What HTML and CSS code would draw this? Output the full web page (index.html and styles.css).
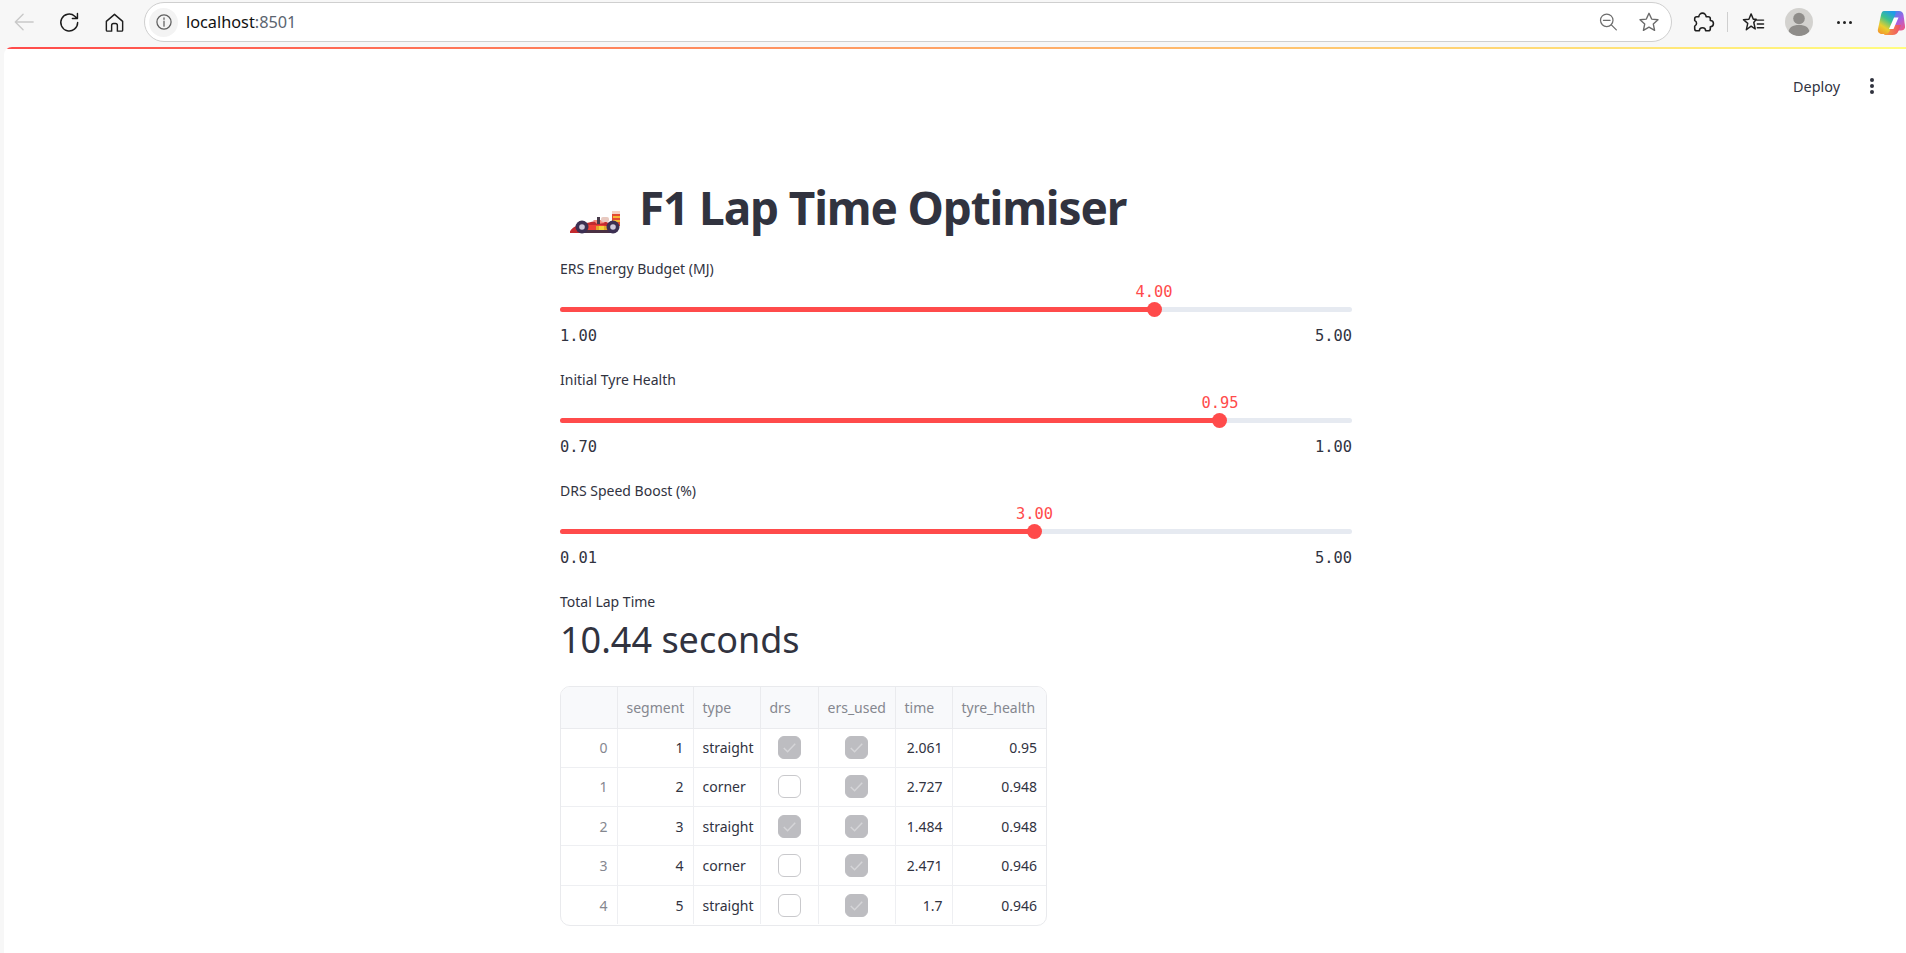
FILE: index.html
```html
<!DOCTYPE html>
<html lang="en">
<head>
<meta charset="utf-8">
<title>F1 Lap Time Optimiser</title>
<link rel="stylesheet" href="styles.css">
</head>
<body>
<header class="chrome">
  <div class="nav">
    <svg class="ic back" viewBox="0 0 24 24"><path d="M22 12H3M11 3.500 2.500 12l8.500 8.500"/></svg>
    <svg class="ic reload" viewBox="0 0 24 24"><path d="M20.500 12a8.800 8.800 0 1 1-3-6.600L20 7.700M20.300 2.500v5.300H15"/></svg>
    <svg class="ic home" viewBox="0 0 24 24"><path d="M12 3.500 3.500 10.800V20a1 1 0 0 0 1 1H9v-6a2 2 0 0 1 2-2h2a2 2 0 0 1 2 2v6h4.500a1 1 0 0 0 1-1v-9.200z"/></svg>
  </div>
  <div class="omni">
    <span class="site-info"><svg class="ic info" viewBox="0 0 24 24"><circle cx="12" cy="12" r="8.500"/><path d="M12 11v6M12 7v1.800"/></svg></span>
    <span class="url">localhost<span class="port">:8501</span></span>
    <span class="omni-right">
      <svg class="ic zoomout" viewBox="0 0 24 24"><circle cx="10.500" cy="10" r="7.500"/><path d="M6.500 10h8M16 15.500l6 6"/></svg>
      <svg class="ic star" viewBox="0 0 24 24"><path d="m12 2.500 2.900 6.300 6.900.8-5.100 4.700 1.400 6.800-6.100-3.400-6.100 3.400 1.400-6.800L2.200 9.600l6.900-.8z"/></svg>
    </span>
  </div>
  <div class="tools">
    <svg class="ic ext" viewBox="0 0 24 24"><path d="M8.500 6.500a3.500 3.500 0 0 1 7 0h2a2 2 0 0 1 2 2V10a3 3 0 0 1 0 6v2a2 2 0 0 1-2 2H15a3 3 0 0 0-6 0H6.500a2 2 0 0 1-2-2v-2.500a3 3 0 0 0 0-5.500V8.500a2 2 0 0 1 2-2z"/></svg>
    <span class="divider"></span>
    <svg class="ic fav" viewBox="0 0 24 24"><path d="m9.500 3 2.300 5.600h3L12.300 12l1.500 6.800-4.300-3-5 3.800 1.500-6.700L1.500 9.100l5.700-.5zM15 9.500h7.500M16 13.500h6.500M16 17.500h6.500"/></svg>
    <span class="avatar"><svg viewBox="0 0 28 28"><circle cx="14" cy="10.500" r="5.800"/><path d="M3.500 24.500c.6-5.500 4-7.500 10.500-7.500s9.900 2 10.500 7.500A14 14 0 0 1 14 28a14 14 0 0 1-10.500-3.500z"/></svg></span>
    <span class="more"><i></i><i></i><i></i></span>
    <svg class="copilot" viewBox="0 0 28 28">
      <defs>
        <linearGradient id="cpa" x1=".7" y1="0" x2=".2" y2="1"><stop offset="0" stop-color="#1f9be8"/><stop offset=".35" stop-color="#3cc28c"/><stop offset=".7" stop-color="#e8cf2f"/><stop offset="1" stop-color="#f39a2b"/></linearGradient>
        <linearGradient id="cpb" x1=".2" y1="0" x2=".8" y2="1"><stop offset="0" stop-color="#3d8af0"/><stop offset=".5" stop-color="#a65fe0"/><stop offset="1" stop-color="#ee5a8a"/></linearGradient>
        <linearGradient id="cpc" x1="0" y1="0" x2="1" y2="0"><stop offset="0" stop-color="#f7a13a"/><stop offset="1" stop-color="#ed4f6b"/></linearGradient>
      </defs>
      <path fill="url(#cpb)" d="M15 3h7c2.500 0 4 1.500 4.500 4l1.500 11c.3 3-1.500 4.500-4 4.500H15z"/>
      <path fill="url(#cpc)" d="M13 17h11l-2.500 6c-1 2.500-3 4-6 4H7z"/>
      <path fill="url(#cpa)" d="M7 3h10c1.500 0 2 1 1.500 2.500L13 22c-.8 2.400-2.500 4-4.500 4H5c-3 0-4.800-2.500-4-5L4 7c.6-2.400 1.300-4 3-4z"/>
      <path fill="#fff" d="M17 9.500h4.500l-5 11.500H12z"/>
    </svg>
  </div>
</header>

<div class="page">
  <div class="gradient"></div>
  <div class="app-head">
    <span class="deploy">Deploy</span>
    <span class="kebab"><i></i><i></i><i></i></span>
  </div>
  <main class="main">
    <h1 class="title">
      <svg class="car" viewBox="0 0 52 24">
        <path fill="#c22a2f" d="M1 21.500c2-4 7-7 14-8 6-1 13-3.500 20-2.500l9 4v8H1z"/>
        <path fill="#ef3f36" d="M8 15h26l8 2v3H8z"/>
        <path fill="#f28b7c" d="M24 10h8l4 3-8 1z"/>
        <rect fill="#473a4a" x="28" y="7" width="3" height="7"/>
        <rect fill="#e8c9c0" x="32" y="7" width="8" height="5" rx="2"/>
        <rect fill="#e34b32" x="43" y="1" width="8" height="15"/>
        <rect fill="#f5d1c4" x="43" y="1" width="8" height="3"/>
        <rect fill="#f7b733" x="44" y="6" width="7" height="2"/>
        <rect fill="#f7b733" x="44" y="10" width="7" height="2"/>
        <rect fill="#e2a52a" x="27" y="16" width="11" height="6"/>
        <rect fill="#f2d13b" x="30" y="16" width="5" height="6"/>
        <rect fill="#4a3143" x="14" y="20" width="30" height="3"/>
        <circle fill="#3c2f52" cx="13" cy="17" r="6.500"/><circle fill="#cfc8dc" cx="13" cy="17" r="2.800"/>
        <circle fill="#3c2f52" cx="44" cy="17" r="6.500"/><circle fill="#cfc8dc" cx="44" cy="17" r="2.800"/>
      </svg>
      <span>F1 Lap Time Optimiser</span>
    </h1>

    <section class="slider">
      <label class="field-label">ERS Energy Budget (MJ)</label>
      <div class="track">
        <div class="fill" style="width:75%"></div>
        <div class="thumb" style="left:75%"><span class="thumb-value">4.00</span></div>
      </div>
      <div class="ticks"><span>1.00</span><span>5.00</span></div>
    </section>
    <section class="slider">
      <label class="field-label">Initial Tyre Health</label>
      <div class="track">
        <div class="fill" style="width:83.33%"></div>
        <div class="thumb" style="left:83.33%"><span class="thumb-value">0.95</span></div>
      </div>
      <div class="ticks"><span>0.70</span><span>1.00</span></div>
    </section>
    <section class="slider">
      <label class="field-label">DRS Speed Boost (%)</label>
      <div class="track">
        <div class="fill" style="width:59.92%"></div>
        <div class="thumb" style="left:59.92%"><span class="thumb-value">3.00</span></div>
      </div>
      <div class="ticks"><span>0.01</span><span>5.00</span></div>
    </section>

    <div class="metric">
      <div class="field-label">Total Lap Time</div>
      <div class="metric-value">10.44 seconds</div>
    </div>

    <div class="table-wrap">
      <table class="grid">
        <thead>
          <tr><th class="c-idx"></th><th class="c-seg">segment</th><th class="c-type">type</th><th class="c-drs">drs</th><th class="c-ers">ers_used</th><th class="c-time">time</th><th class="c-ty">tyre_health</th></tr>
        </thead>
        <tbody>
          <tr><td class="idx">0</td><td class="num">1</td><td>straight</td><td class="chk"><span class="box on"><svg viewBox="0 0 22 22"><path d="m5 11.500 4 4L17 7"/></svg></span></td><td class="chk"><span class="box on"><svg viewBox="0 0 22 22"><path d="m5 11.500 4 4L17 7"/></svg></span></td><td class="num">2.061</td><td class="num">0.95</td></tr>
          <tr><td class="idx">1</td><td class="num">2</td><td>corner</td><td class="chk"><span class="box"></span></td><td class="chk"><span class="box on"><svg viewBox="0 0 22 22"><path d="m5 11.500 4 4L17 7"/></svg></span></td><td class="num">2.727</td><td class="num">0.948</td></tr>
          <tr><td class="idx">2</td><td class="num">3</td><td>straight</td><td class="chk"><span class="box on"><svg viewBox="0 0 22 22"><path d="m5 11.500 4 4L17 7"/></svg></span></td><td class="chk"><span class="box on"><svg viewBox="0 0 22 22"><path d="m5 11.500 4 4L17 7"/></svg></span></td><td class="num">1.484</td><td class="num">0.948</td></tr>
          <tr><td class="idx">3</td><td class="num">4</td><td>corner</td><td class="chk"><span class="box"></span></td><td class="chk"><span class="box on"><svg viewBox="0 0 22 22"><path d="m5 11.500 4 4L17 7"/></svg></span></td><td class="num">2.471</td><td class="num">0.946</td></tr>
          <tr><td class="idx">4</td><td class="num">5</td><td>straight</td><td class="chk"><span class="box"></span></td><td class="chk"><span class="box on"><svg viewBox="0 0 22 22"><path d="m5 11.500 4 4L17 7"/></svg></span></td><td class="num">1.7</td><td class="num">0.946</td></tr>
        </tbody>
      </table>
    </div>
  </main>
</div>
</body>
</html>
```
FILE: styles.css
```css
* { box-sizing: border-box; }
html, body { margin: 0; height: 100%; overflow: hidden; }
body {
  background: #f7f7f7;
  font-family: "Noto Sans", "Liberation Sans", sans-serif;
  color: #31333f;
  display: flex;
  flex-direction: column;
}
.ic { fill: none; stroke: #1f1f1f; stroke-width: 1.500; stroke-linejoin: round; stroke-linecap: round; flex: none; }

/* Browser toolbar */
.chrome { height: 47px; display: flex; align-items: flex-start; flex: none; }
.nav { width: 144px; height: 44px; display: flex; align-items: center; flex: none; padding-left: 13px; }
.back { width: 22px; height: 22px; stroke: #c9c9c9; }
.reload { width: 23px; height: 23px; margin-left: 23px; stroke: #1b1b1b; }
.home { width: 23px; height: 23px; margin-left: 22px; }
.omni {
  width: 1528px; height: 40px; margin-top: 2px; background: #fff;
  border: 1px solid #cfcfcf; border-radius: 20px;
  display: flex; align-items: center; flex: none; padding-left: 4px;
}
.site-info { width: 29px; height: 29px; border-radius: 50%; background: #f3f3f3; display: flex; align-items: center; justify-content: center; }
.info { width: 20px; height: 20px; stroke: #5e5e5e; }
.url { margin-left: 8px; font-size: 16.300px; font-family: "Noto Sans", sans-serif; color: #111; }
.port { color: #5b6470; }
.omni-right { margin-left: auto; display: flex; align-items: center; gap: 20px; padding-right: 11px; }
.zoomout { width: 20px; height: 20px; stroke: #6d6d6d; }
.star { width: 22px; height: 22px; stroke: #6a6a6a; }
.tools { height: 44px; display: flex; align-items: center; flex: 1; padding-left: 18px; position: relative; }
.ext { width: 25px; height: 25px; }
.divider { width: 1px; height: 20px; background: #cfcfcf; margin-left: 12px; }
.fav { width: 23px; height: 23px; margin-left: 14px; }
.avatar { width: 28px; height: 28px; border-radius: 50%; background: #d3d2cf; margin-left: 20px; overflow: hidden; flex: none; }
.avatar svg { display: block; width: 28px; height: 28px; fill: #8f8d8a; }
.more { display: flex; gap: 3px; margin-left: 24px; flex: none; }
.more i { width: 3px; height: 3px; border-radius: 50%; background: #222; }
.copilot { width: 28px; height: 28px; margin-left: 25px; flex: none; }

/* Streamlit page */
.page {
  flex: 1; margin-left: 4px; background: #fff; border-top-left-radius: 8px;
  overflow: hidden; display: flex; flex-direction: column; min-height: 0;
}
.gradient { height: 2px; flex: none; background: linear-gradient(90deg, #ff4b4b, #fffd80); }
.app-head { height: 0; display: flex; justify-content: flex-end; align-items: center; padding-right: 32px; position: relative; top: 37px; flex: none; }
.deploy { font-size: 14.400px; color: #31333f; margin-right: 30px; }
.kebab { display: flex; flex-direction: column; gap: 2.300px; }
.kebab i { width: 4px; height: 4px; border-radius: 50%; background: #31333f; }

.main { width: 792px; margin-left: 556px; padding-top: 124px; }

.title { display: flex; align-items: flex-start; margin: 0 0 12px; font-size: 46px; font-weight: 700; line-height: 68px; height: 68px; letter-spacing: -1.150px; }
.car { width: 52px; height: 24px; margin: 37px 18px 0 9px; flex: none; }

.field-label { display: block; font-size: 14px; line-height: 20px; position: relative; top: .5px; }
.slider { height: 111px; padding-top: 5px; }
.track { position: relative; height: 5px; margin-top: 29px; background: #e6eaf1; border-radius: 3px; }
.fill { height: 100%; background: #ff4b4b; border-radius: 3px; }
.thumb { position: absolute; top: 50%; width: 15px; height: 15px; margin: -7.500px 0 0 -7.500px; border-radius: 50%; background: #ff4b4b; }
.thumb-value { position: absolute; left: 50%; top: -19px; transform: translateX(-50%); font: 15.400px/18px "DejaVu Sans Mono", monospace; color: #ff4b4b; }
.ticks { display: flex; justify-content: space-between; margin-top: 12px; font: 15.400px/24px "DejaVu Sans Mono", monospace; color: #31333f; }

.metric { padding-top: 5px; }
.metric-value { font-size: 36px; line-height: 52px; margin-top: 3px; }

.table-wrap { margin-top: 20px; width: 487px; height: 240px; border: 1px solid #e9eaed; border-radius: 10px; overflow: hidden; }
.grid { border-collapse: collapse; table-layout: fixed; width: 485px; font-size: 14px; color: #31333f; }
.grid th { height: 41px; background: #f8f9fb; color: #85878f; font-weight: 400; text-align: left; padding: 0 9px; border-right: 1px solid #eaebee; border-bottom: 1px solid #eaebee; white-space: nowrap; overflow: hidden; }
.grid td { height: 39.300px; padding: 0 9px; border-right: 1px solid #eeeff2; border-bottom: 1px solid #eeeff2; white-space: nowrap; }
.grid tr:last-child td { border-bottom: 0; }
.grid th:last-child, .grid td:last-child { border-right: 0; }
.c-idx { width: 56px; }
.c-seg { width: 76px; }
.c-type { width: 67px; }
.c-drs { width: 58px; }
.c-ers { width: 77px; }
.c-time { width: 57px; }
.c-ty { width: 94px; }
.grid .idx { text-align: right; color: #85878f; }
.grid .num { text-align: right; }
.grid .chk { text-align: center; padding: 0; }
.box { display: inline-block; width: 23px; height: 23px; border: 1px solid #c9c9cc; border-radius: 6px; background: #fff; vertical-align: middle; }
.box.on { background: #bdbdc1; border-color: #bdbdc1; }
.box svg { display: block; width: 21px; height: 21px; fill: none; stroke: #d5d5d8; stroke-width: 1.500; }
```
